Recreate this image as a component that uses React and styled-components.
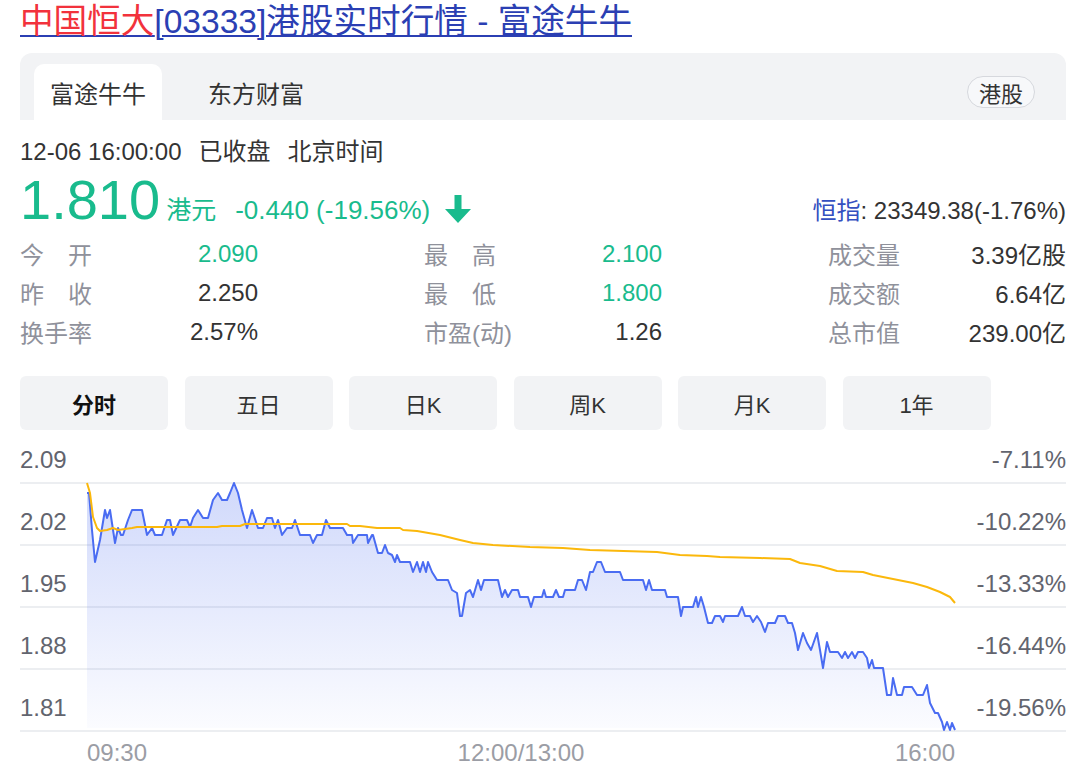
import styled, { createGlobalStyle } from 'styled-components';

const GlobalStyle = createGlobalStyle`
  html, body {
    margin: 0;
    padding: 0;
    background: #fff;
  }
  body {
    font-family: "Liberation Sans", "Noto Sans CJK SC", sans-serif;
    color: #333;
  }
  * {
    box-sizing: border-box;
  }
`;

const GREEN = '#19bb8d';

const stats = [
  [
    { label: '今\u3000开', value: '2.090', up: true },
    { label: '最\u3000高', value: '2.100', up: true },
    { label: '成交量', value: '3.39亿股' },
  ],
  [
    { label: '昨\u3000收', value: '2.250' },
    { label: '最\u3000低', value: '1.800', up: true },
    { label: '成交额', value: '6.64亿' },
  ],
  [
    { label: '换手率', value: '2.57%' },
    { label: '市盈(动)', value: '1.26' },
    { label: '总市值', value: '239.00亿' },
  ],
];

const periods = ['分时', '五日', '日K', '周K', '月K', '1年'];

const axis = [
  ['2.09', '-7.11%'],
  ['2.02', '-10.22%'],
  ['1.95', '-13.33%'],
  ['1.88', '-16.44%'],
  ['1.81', '-19.56%'],
];

// page coordinates, drawn through the svg viewBox below
const priceLine =
  '87,493 89,493 92,530 95,562 100,540 105,510 107,518 110,510 115,543 118,528 121,535 123,535 128,520 132,510 142,510 147,535 152,528 155,535 162,535 167,520 170,520 173,535 180,520 187,520 190,527 193,518 198,510 203,518 208,518 213,500 218,493 222,500 227,500 230,493 234,483 238,493 242,510 247,528 252,510 258,528 263,528 267,518 272,518 275,528 278,520 282,535 287,528 292,528 295,520 300,535 310,535 313,543 317,535 322,535 326,520 330,528 343,528 347,535 352,535 353,543 358,535 367,535 368,543 372,535 373,535 378,553 382,553 385,545 388,553 392,555 395,562 397,555 400,562 410,562 413,572 417,562 420,572 423,562 426,572 428,562 432,572 437,580 448,580 452,590 457,593 460,616 462,616 466,593 470,590 473,597 478,580 481,590 484,580 498,580 502,597 505,590 508,597 512,590 518,590 520,597 528,597 531,607 534,597 542,597 544,590 546,597 553,597 556,590 559,597 563,597 565,590 575,590 578,580 582,580 586,590 590,572 593,572 597,562 601,562 605,572 620,572 623,580 643,580 646,590 649,580 652,590 665,590 667,597 678,597 681,616 683,607 693,607 696,597 698,607 701,597 704,607 708,623 712,623 715,616 720,616 723,622 725,616 738,616 742,607 745,616 750,616 753,622 757,616 761,622 765,632 768,623 775,623 778,616 785,616 788,623 792,623 795,633 798,650 803,633 807,643 811,650 817,633 820,650 823,668 827,642 830,652 838,652 842,658 845,652 848,658 852,652 855,658 858,652 863,652 867,658 869,668 872,660 874,668 883,668 887,695 891,695 893,678 897,695 902,695 904,687 912,687 917,695 923,695 927,685 930,703 935,713 938,713 942,722 944,730 947,722 950,730 952,723 955,730';

const avgLine =
  '87,483 90,493 93,517 97,528 100,531 107,530 113,528 118,530 132,528 137,527 217,527 222,526 240,526 245,524 347,524 350,526 360,526 377,528 400,528 403,530 417,531 440,535 460,540 473,543 493,545 530,547 563,548 590,550 657,552 680,555 707,556 720,557 760,558 790,559 800,563 820,566 837,571 863,572 873,575 893,579 913,583 927,587 940,592 950,597 955,603';

const App = () => {
  return (
    <>
      <GlobalStyle />
      <Page>
        <Title href="#">
          <TitleName>中国恒大</TitleName>[03333]港股实时行情 - 富途牛牛
        </Title>

        <TabBar>
          <Tab $active>富途牛牛</Tab>
          <Tab>东方财富</Tab>
          <Badge>港股</Badge>
        </TabBar>

        <DateLine>
          12-06 16:00:00<Spaced>已收盘</Spaced>
          <Spaced>北京时间</Spaced>
        </DateLine>

        <PriceRow>
          <Price>1.810</Price>
          <Unit>港元</Unit>
          <Change>-0.440 (-19.56%)</Change>
          <DownArrow viewBox="0 0 26 28">
            <path d="M9.5 0h7v14h9.5L13 28 0 14h9.5z" fill={GREEN} />
          </DownArrow>
          <IndexQuote>
            <IndexName>恒指</IndexName>: 23349.38(-1.76%)
          </IndexQuote>
        </PriceRow>

        <StatsGrid>
          {stats.flat().map((s) => (
            <StatItem key={s.label}>
              <StatLabel>{s.label}</StatLabel>
              <StatValue $up={s.up}>{s.value}</StatValue>
            </StatItem>
          ))}
        </StatsGrid>

        <PeriodBar>
          {periods.map((p, i) => (
            <PeriodButton key={p} $active={i === 0}>
              {p}
            </PeriodButton>
          ))}
        </PeriodBar>

        <ChartBox>
          {axis.map(([price, pct], i) => (
            <GridRow key={price} $first={i === 0}>
              <AxisLabel>{price}</AxisLabel>
              <AxisLabel>{pct}</AxisLabel>
            </GridRow>
          ))}
          <TimeAxis>
            <span>09:30</span>
            <span>12:00/13:00</span>
            <span>16:00</span>
          </TimeAxis>
          <ChartSvg viewBox="20 440 1046 300" width="1046" height="300">
            <defs>
              <linearGradient id="area" x1="0" y1="0" x2="0" y2="1">
                <stop offset="0" stopColor="#4b6cf0" stopOpacity="0.26" />
                <stop offset="1" stopColor="#4b6cf0" stopOpacity="0.02" />
              </linearGradient>
            </defs>
            <polygon points={`${priceLine} 955,728 87,728`} fill="url(#area)" />
            <polyline points={priceLine} fill="none" stroke="#4a6cf2" strokeWidth="2" strokeLinejoin="round" />
            <polyline points={avgLine} fill="none" stroke="#fbb80c" strokeWidth="2" strokeLinejoin="round" />
          </ChartSvg>
        </ChartBox>
      </Page>
    </>
  );
};

const Page = styled.div`
  width: 1080px;
  padding: 0 14px 0 20px;
`;

const Title = styled.a`
  display: inline-block;
  font-size: 33.6px;
  line-height: 44px;
  color: #2b3fb3;
  text-decoration: underline;
  text-underline-offset: 2px;
  text-decoration-thickness: 1.5px;
`;

const TitleName = styled.span`
  color: #f2323c;
`;

const TabBar = styled.div`
  display: flex;
  align-items: flex-end;
  gap: 30px;
  height: 67px;
  margin-top: 9px;
  padding: 0 31px 0 14px;
  background: #f2f3f5;
  border-radius: 12px 12px 0 0;
`;

const Tab = styled.div`
  height: 56px;
  padding: 0 16px;
  display: flex;
  align-items: center;
  font-size: 24px;
  color: #333;
  background: ${(props) => (props.$active ? '#fff' : 'transparent')};
  border-radius: 10px 10px 0 0;
`;

const Badge = styled.div`
  margin-left: auto;
  align-self: center;
  margin-top: 11px;
  height: 32px;
  padding: 0 11px;
  display: flex;
  align-items: center;
  font-size: 22px;
  color: #333;
  background: #f7f8fa;
  border: 1px solid #d6d8dd;
  border-radius: 16px;
`;

const DateLine = styled.div`
  margin-top: 16px;
  font-size: 24px;
  line-height: 32px;
  color: #333;
`;

const Spaced = styled.span`
  margin-left: 17px;
`;

const PriceRow = styled.div`
  display: flex;
  align-items: baseline;
  margin-top: 4px;
  height: 56px;
`;

const Price = styled.span`
  font-size: 56px;
  line-height: 56px;
  color: ${GREEN};
`;

const Unit = styled.span`
  margin-left: 6px;
  font-size: 25px;
  color: ${GREEN};
`;

const Change = styled.span`
  margin-left: 19px;
  font-size: 26px;
  color: ${GREEN};
`;

const DownArrow = styled.svg`
  width: 26px;
  height: 28px;
  margin-left: 15px;
  align-self: center;
  margin-top: 18px;
`;

const IndexQuote = styled.span`
  margin-left: auto;
  font-size: 24px;
  color: #333;
`;

const IndexName = styled.span`
  color: #3450c0;
`;

const StatsGrid = styled.div`
  display: grid;
  grid-template-columns: repeat(3, 238px);
  justify-content: space-between;
  margin-top: 6px;
`;

const StatItem = styled.div`
  display: flex;
  justify-content: space-between;
  height: 39px;
  align-items: center;
  font-size: 24px;
`;

const StatLabel = styled.span`
  color: #8f919b;
`;

const StatValue = styled.span`
  color: ${(props) => (props.$up ? GREEN : '#333')};
`;

const PeriodBar = styled.div`
  display: flex;
  gap: 16.5px;
  margin-top: 25px;
`;

const PeriodButton = styled.div`
  width: 148px;
  height: 54px;
  display: flex;
  align-items: center;
  justify-content: center;
  background: #f2f3f5;
  border-radius: 6px;
  font-size: 22px;
  color: ${(props) => (props.$active ? '#111' : '#333')};
  font-weight: ${(props) => (props.$active ? 700 : 400)};
`;

const ChartBox = styled.div`
  position: relative;
  margin-top: 10px;
`;

const GridRow = styled.div`
  display: flex;
  justify-content: space-between;
  align-items: flex-end;
  height: ${(props) => (props.$first ? '44px' : '62px')};
  padding-bottom: 10px;
  border-bottom: 2px solid #eceef1;
`;

const AxisLabel = styled.span`
  font-size: 24px;
  line-height: 24px;
  color: #62646e;
`;

const TimeAxis = styled.div`
  display: flex;
  justify-content: space-between;
  width: 935px;
  padding-left: 67px;
  margin-top: 9px;
  font-size: 24px;
  line-height: 24px;
  color: #9b9da5;
`;

const ChartSvg = styled.svg`
  position: absolute;
  top: 0;
  left: 0;
  overflow: visible;
`;

export default App;
